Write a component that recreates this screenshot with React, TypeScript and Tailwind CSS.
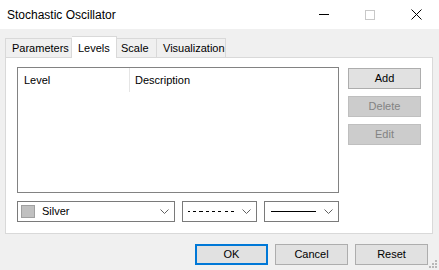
import React from 'react'

const font = { fontFamily: '"Liberation Sans", Arial, sans-serif' }

const Chevron = () => (
  <svg width="9" height="5" viewBox="0 0 9 5" className="shrink-0">
    <path d="M0.5 0.5 L4.5 4.5 L8.5 0.5" fill="none" stroke="#606060" strokeWidth="1" />
  </svg>
)

const Btn = ({ label, disabled, primary }: { label: string; disabled?: boolean; primary?: boolean }) => (
  <div
    className={
      'flex h-[21px] w-[73px] items-center justify-center text-[11px] ' +
      (disabled
        ? 'border border-[#bfbfbf] bg-[#cccccc] text-[#838383]'
        : primary
          ? 'border-2 border-[#0078d7] bg-[#e1e1e1] text-black'
          : 'border border-[#adadad] bg-[#e1e1e1] text-black')
    }
  >
    {label}
  </div>
)

export default function App() {
  return (
    <div className="flex h-[270px] w-[439px] flex-col bg-[#f0f0f0] text-black" style={font}>
      {/* title bar */}
      <div className="flex h-[29px] items-center bg-white">
        <div className="flex-1 pl-[7px] text-[12px]">Stochastic Oscillator</div>
        <div className="flex h-full w-[46px] items-center justify-center">
          <div className="h-px w-[10px] bg-black" />
        </div>
        <div className="flex h-full w-[46px] items-center justify-center">
          <div className="h-[10px] w-[10px] border border-[#c8c8c8]" />
        </div>
        <div className="flex h-full w-[46px] items-center justify-center">
          <svg width="11" height="11" viewBox="0 0 11 11">
            <path d="M0.5 0.5 L10.5 10.5 M10.5 0.5 L0.5 10.5" stroke="#000" strokeWidth="1" />
          </svg>
        </div>
      </div>

      {/* tabs */}
      <div className="flex h-[28px] items-end pl-[5px] text-[11px]">
        <div className="flex h-[19px] w-[67px] items-center border border-b-0 border-[#d9d9d9] bg-[#f0f0f0] pl-[6px]">
          Parameters
        </div>
        <div className="relative z-10 -mb-px flex h-[22px] w-[45px] items-start border border-b-0 border-l-0 border-[#d9d9d9] bg-white pl-[6px] pt-[3px]">
          Levels
        </div>
        <div className="flex h-[19px] w-[40px] items-center border-t border-r border-[#d9d9d9] bg-[#f0f0f0] pl-[4px]">
          Scale
        </div>
        <div className="flex h-[19px] w-[69px] items-center border-t border-r border-[#d9d9d9] bg-[#f0f0f0] pl-[6px]">
          Visualization
        </div>
      </div>

      {/* panel */}
      <div className="mx-[5px] flex h-[177px] w-[428px] flex-col border border-[#d9d9d9] bg-white pl-[11px] pt-[9px]">
        <div className="flex gap-[9px]">
          <div className="h-[126px] w-[322px] border border-[#828282] bg-white">
            <div className="flex h-[24px] items-center text-[11px]">
              <div className="flex h-full w-[112px] items-center border-r border-[#e5e5e5] pl-[6px]">Level</div>
              <div className="pl-[5px]">Description</div>
            </div>
          </div>
          <div className="flex flex-col gap-[7px] pt-px">
            <Btn label="Add" />
            <Btn label="Delete" disabled />
            <Btn label="Edit" disabled />
          </div>
        </div>
        <div className="mt-[8px] flex gap-[7px]">
          <div className="flex h-[21px] w-[158px] items-center border border-[#7a7a7a] pl-[3px] pr-[5px] text-[11px]">
            <div className="h-[13px] w-[14px] border border-[#a0a0a0] bg-[#c0c0c0]" />
            <div className="flex-1 pl-[7px]">Silver</div>
            <Chevron />
          </div>
          <div className="flex h-[21px] w-[75px] items-center border border-[#7a7a7a] pl-[5px] pr-[5px]">
            <div className="mr-auto w-[46px] border-t border-dashed border-black [border-image:repeating-linear-gradient(90deg,#000_0_3px,transparent_3px_6px)_1]" />
            <Chevron />
          </div>
          <div className="flex h-[21px] w-[75px] items-center border border-[#7a7a7a] pl-[6px] pr-[5px]">
            <div className="mr-auto h-px w-[45px] bg-black" />
            <Chevron />
          </div>
        </div>
      </div>

      {/* bottom buttons */}
      <div className="relative flex flex-1 justify-end gap-[7px] pr-[11px] pt-[10px]">
        <Btn label="OK" primary />
        <Btn label="Cancel" />
        <Btn label="Reset" />
        <svg className="absolute bottom-[2px] right-[2px]" width="8" height="8" viewBox="0 0 8 8">
          <g fill="#b8b8b8">
            <rect x="6" y="0" width="2" height="2" />
            <rect x="3" y="3" width="2" height="2" />
            <rect x="6" y="3" width="2" height="2" />
            <rect x="0" y="6" width="2" height="2" />
            <rect x="3" y="6" width="2" height="2" />
            <rect x="6" y="6" width="2" height="2" />
          </g>
        </svg>
      </div>
    </div>
  )
}
